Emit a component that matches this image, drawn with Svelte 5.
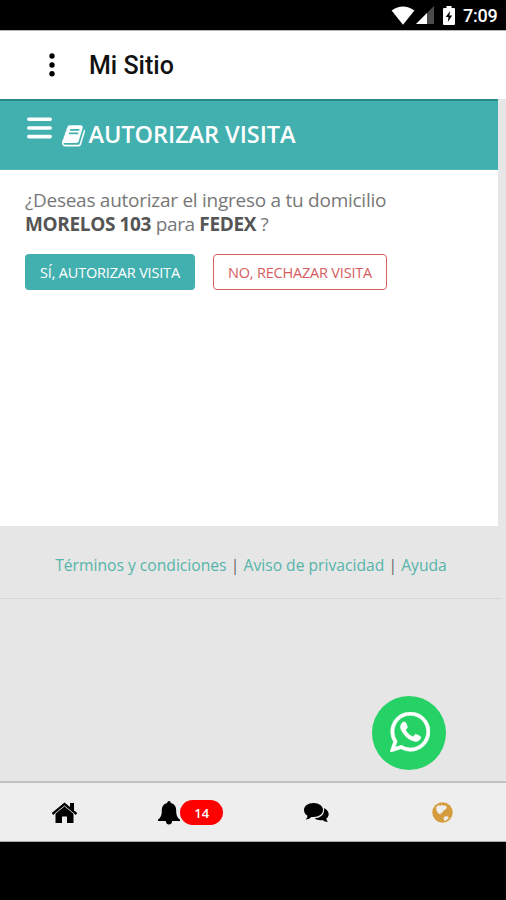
<script>
  const links = ['Términos y condiciones', 'Aviso de privacidad', 'Ayuda'];
</script>

<div class="phone">
  <div class="status">
    <svg class="wifi" width="24" height="19" viewBox="0 0 24 19"><path d="M.6 4.6Q12-3.8 23.4 4.6L12 18.7Z" fill="#fff" /></svg>
    <svg class="signal" width="18" height="18" viewBox="0 0 18 18"><path d="M18 0V18H0Z" fill="#4b4b4b" /><path d="M11 7V18H0Z" fill="#fff" /></svg>
    <svg class="battery" width="12" height="19" viewBox="0 0 12 19"><path d="M3.5 0h5v2H11q1 0 1 1v15q0 1-1 1H1q-1 0-1-1V3q0-1 1-1h2.500Z" fill="#fff" /><path d="M7 5 2.800 11H5.500L4.800 16 9.200 9.500H6.400Z" fill="#000" /></svg>
    <span class="time">7:09</span>
  </div>
  <header class="appbar">
    <svg width="8" height="24" viewBox="0 0 8 24"><circle cx="4" cy="3" r="2.7" /><circle cx="4" cy="12" r="2.7" /><circle cx="4" cy="20.800" r="2.7" /></svg>
    <span>Mi Sitio</span>
  </header>
  <main class="page">
    <div class="banner">
      <svg class="burger" width="25" height="22" viewBox="0 0 25 22"><path d="M1.800 2.200h21.400M1.800 11h21.400M1.800 19.600h21.400" stroke="#fff" stroke-width="3.600" stroke-linecap="round" /></svg>
      <svg class="book" width="23" height="22" viewBox="0 0 1664 1536"><path fill="#fff" d="M1639 350q40 57 18 129l-275 906q-19 64-76.500 107.500T1183 1536H260q-77 0-148.500-53.500T12 1351q-24-67-2-127 0-4 3-27t4-37q1-8-3-21.500t-3-19.500q2-11 8-21t16.500-23.500T52 1051q23-38 45-91.500t30-91.500q3-10 .5-30t-.5-28q3-11 17-28t17-23q21-36 42-92t25-90q1-9-2.500-32t.5-28q4-13 22-30.500t22-22.500q19-26 42.500-84.500T340 282q1-8-3-25.500t-2-26.500q2-8 9-18t18-23 17-21q8-12 16.500-30.500t15-35 16-36 19.500-32T469.500 10.500t36-11.500T553 4.500l-1 3q38-9 51-9h761q74 0 114 56t18 130l-274 906q-36 119-71.500 153.500T1022 1278.500H153q-27 0-38 15-11 16-1 43 24 70 144 70h923q29 0 56-15.500t35-41.500l300-987q7-22 5-57 38 15 59 43zM575 352q-4 13 2 22.500t20 9.500h608q13 0 25.500-9.500T1247 352l21-64q4-13-2-22.500t-20-9.500H638q-13 0-25.500 9.500T596 288zm-83 256q-4 13 2 22.500t20 9.500h608q13 0 25.500-9.500T1164 608l21-64q4-13-2-22.500t-20-9.500H555q-13 0-25.500 9.500T513 544z" /></svg>
      <h1>AUTORIZAR VISITA</h1>
    </div>
    <div class="content">
      <p><span class="ask">¿Deseas autorizar el ingreso a tu domicilio</span><br /><span class="detail"><b>MORELOS 103</b> para <b>FEDEX</b> ?</span></p>
      <div class="actions">
        <button class="yes">SÍ, AUTORIZAR VISITA</button>
        <button class="no">NO, RECHAZAR VISITA</button>
      </div>
    </div>
  </main>
  <footer>
    <nav class="links">
      {#each links as link, i}{#if i}<i>|</i>{/if}<a href="#top">{link}</a>{/each}
    </nav>
    <button class="whatsapp" aria-label="WhatsApp">
      <svg width="40" height="40" viewBox="0 26 1536 1536"><path fill="#fff" stroke="#fff" stroke-width="24" d="M985 878q13 0 97.500 44t89.500 53q2 5 2 15 0 33-17 76-16 39-71 65.500t-102 26.500q-57 0-190-62-98-45-170-118t-148-185q-72-107-71-194v-8q3-91 74-158 24-22 52-22 6 0 18 1.500t19 1.500q19 0 26.500 6.500t15.500 27.500q8 20 33 88t25 75q0 21-34.500 57.500t-34.500 46.500q0 7 5 15 34 73 102 137 56 53 151 101 12 7 22 7 15 0 54-48.500t52-48.500zm-203 530q127 0 243.500-50t200.500-134 134-200.500 50-243.500-50-243.500-134-200.500-200.500-134-243.500-50-243.500 50-200.500 134-134 200.500-50 243.500q0 203 120 368l-79 233 242-77q158 104 345 104zm0-1382q153 0 292.500 60t240.500 161 161 240.500 60 292.500-60 292.500-161 240.500-240.500 161-292.500 60q-195 0-365-94l-417 134 136-405q-108-178-108-389 0-153 60-292.500t161-240.500 240.500-161 292.500-60z" /></svg>
    </button>
  </footer>
  <nav class="tabs">
    <div><svg width="27" height="22" viewBox="0 0 27 22"><path d="M13.500 3.500 22.500 11V21H16V14.500H11V21H4.500V11Z" /><path d="M1.500 12 13.500 2 25.500 12" fill="none" stroke="#000" stroke-width="2.300" /><path d="M19 1h4v8l-4-3.500Z" /><path d="M3.500 12.200 13.500 4 23.500 12.200" fill="none" stroke="#eee" stroke-width=".8" /></svg></div>
    <div class="alerts"><svg width="22" height="24" viewBox="0 0 22 24"><path d="M11 0q1.800 0 1.800 2c4 1 5.400 4 5.400 7.500 0 5 1.300 7.500 3.800 9V20H14.200q-.5 3.500-3.200 3.500T7.800 20H0v-1.500c2.500-1.500 3.800-4 3.800-9C3.800 6 5.200 3 9.200 2Q9.200 0 11 0Z" /></svg><span class="badge">14</span></div>
    <div><svg width="25" height="20" viewBox="0 0 25 20"><path d="M19.800 5C25.500 7.500 26 13 22.300 15.500q.3 2 1.700 3.500-3.500 0-5.500-2-5 .8-8-1.700 8.500-.5 9.500-6.800Q20.300 6.500 19.800 5Z" /><path d="M9.500 0C15 0 19 3 19 7s-4 7-9.500 7l-2-.1Q5 16.500 1.500 16.500q2-1.500 2-3.800C1.200 11.500 0 9.500 0 7 0 3 4 0 9.500 0Z" /></svg></div>
    <div><svg width="21" height="21" viewBox="0 0 21 21"><circle cx="10.500" cy="10.500" r="10.200" fill="#d59b3d" /><path fill="#eee" d="M4.200 5 6.500 3 8.500 4 9.500 2.500 11.500 4 13 3 15 5.500 13.500 7.500 11.500 8.500 10.500 10.500 8.500 11.500 8.500 12.500 6.500 11.500 4.500 8.500Z" /><path fill="#eee" d="m11.500 16 1.500-1.800 3 .3.800 1.500-2.600 2.600-2 .2Z" /></svg></div>
  </nav>
</div>

<style>
  :global(body) { background: #000; }
  .phone { width: 506px; height: 900px; display: flex; flex-direction: column; background: #000; overflow: hidden; font-family: "Open Sans", sans-serif; }
  svg { display: block; flex: none; }
  .status { height: 30px; box-sizing: border-box; display: flex; align-items: flex-start; justify-content: flex-end; padding: 6px 8px 0 0; color: #fff; }
  .wifi { margin-right: 1px; }
  .signal { margin-right: 9px; }
  .time { font: 500 18px/20px Roboto, sans-serif; width: 35px; margin-left: 8px; letter-spacing: -.2px; }
  .appbar { height: 69px; flex: none; box-sizing: border-box; border-top: 1px solid #b5b5b5; background: #fff; display: flex; align-items: center; padding: 0 0 1px 48px; }
  .appbar span { font: 500 25px/30px Roboto, sans-serif; margin: 3px 0 0 33px; color: #111; }
  .page { width: 498px; height: 427px; background: #fff; flex: none; box-shadow: 8px 0 #e6e6e6; }
  .banner { height: 71px; box-sizing: border-box; border-top: 2px solid #278b89; border-bottom: 1px solid #50b5b3; background: #43b0b0; display: flex; padding-left: 27px; color: #fff; }
  .burger { margin: 16px 10px 0 0; }
  .book { margin: 24px 3.500px 0 0; }
  h1 { font-size: 23.500px; line-height: 30px; font-weight: 600; margin: 18px 0 0; letter-spacing: -.05px; white-space: nowrap; }
  .content { padding: 19px 25px 0; color: #777; }
  p { margin: 0; font-size: 19px; line-height: 23.500px; white-space: nowrap; }
  .ask { letter-spacing: -.26px; }
  .detail { letter-spacing: -.36px; }
  b { color: #555; }
  .actions { display: flex; gap: 18px; margin-top: 18px; }
  button { font-family: inherit; padding: 0; border: 0; }
  .actions button { height: 36px; border-radius: 4px; font-size: 14.500px; letter-spacing: -.19px; white-space: nowrap; }
  .yes { width: 170px; background: #43b0b0; color: #fff; }
  .actions .no { width: 174px; border: 1.500px solid #d66064; background: #fff; color: #d65b60; }
  footer { height: 255px; flex: none; background: #e6e6e6; display: flex; flex-direction: column; }
  .links { height: 73px; flex: none; box-sizing: border-box; border-bottom: 1px solid #d8d8d8; width: 502px; padding-top: 27px; display: flex; justify-content: center; font-size: 15.650px; line-height: 24px; white-space: nowrap; }
  a { color: #55b5aa; text-decoration: none; }
  i { color: #666; font-style: normal; width: 17px; text-align: center; }
  .whatsapp { width: 74px; height: 74px; border-radius: 50%; background: #26d165; display: flex; align-items: center; justify-content: center; margin: 97px 0 0 372px; padding: 0 0 3px 2px; box-sizing: border-box; }
  .tabs { height: 61px; flex: none; box-sizing: border-box; border-top: 2px solid #c1c1c1; border-bottom: 1px solid #aaa; background: #eee; display: flex; align-items: center; padding: 1px 0 0 1px; }
  .tabs div { width: 126.500px; flex: none; display: flex; justify-content: center; }
  .tabs .alerts { align-items: center; margin-right: -1px; }
  .badge { width: 43px; height: 25px; border-radius: 13px; background: #f00; color: #fff; font-size: 13px; line-height: 26px; font-weight: 600; text-align: center; }
</style>
